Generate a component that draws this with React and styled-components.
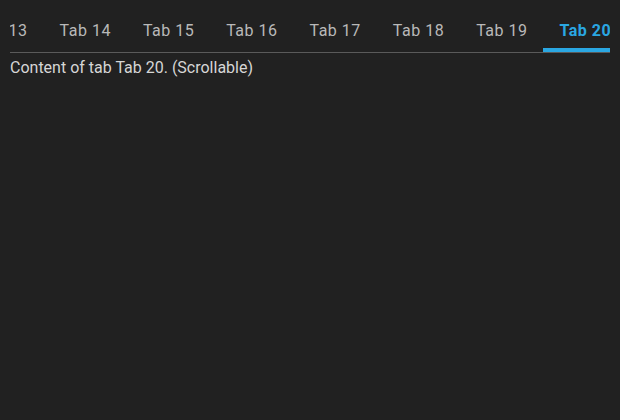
import React, { useLayoutEffect, useRef } from "react";
import styled, { createGlobalStyle } from "styled-components";

const GlobalStyle = createGlobalStyle`
  html, body {
    margin: 0;
    background: #212121;
    font-family: Roboto, "Liberation Sans", sans-serif;
  }
`;

const Page = styled.div`
  min-height: 420px;
  padding: 8px 10px;
  box-sizing: border-box;
  background: #212121;
`;

const TabBar = styled.div`
  display: flex;
  overflow: hidden;
  border-bottom: 1px solid #5a5a5a;
`;

const Tab = styled.button`
  flex: none;
  position: relative;
  height: 44px;
  padding: 0 16px;
  border: none;
  background: none;
  font-family: inherit;
  font-size: 16px;
  letter-spacing: 0.5px;
  font-weight: ${(p) => (p.$active ? 700 : 400)};
  color: ${(p) => (p.$active ? "#2aa7e2" : "#b9b9b9")};
  cursor: pointer;

  &::after {
    content: "";
    position: absolute;
    left: 0;
    right: 0;
    bottom: 0;
    height: 4px;
    background: ${(p) => (p.$active ? "#2aa7e2" : "transparent")};
  }
`;

const Content = styled.p`
  margin: 0;
  padding-top: 5px;
  font-size: 16px;
  line-height: 20px;
  color: #d6d6d6;
`;

const tabs = Array.from({ length: 20 }, (_, i) => `Tab ${i + 1}`);
const active = "Tab 20";

export default function App() {
  const barRef = useRef(null);
  const activeRef = useRef(null);

  useLayoutEffect(() => {
    // the strip is scrolled so the selected tab starts near the right edge
    barRef.current.scrollLeft = activeRef.current.offsetLeft - barRef.current.offsetLeft - 533;
  }, []);

  return (
    <Page>
      <GlobalStyle />
      <TabBar ref={barRef}>
        {tabs.map((t) => (
          <Tab key={t} ref={t === active ? activeRef : null} $active={t === active}>
            {t}
          </Tab>
        ))}
      </TabBar>
      <Content>Content of tab {active}. (Scrollable)</Content>
    </Page>
  );
}
